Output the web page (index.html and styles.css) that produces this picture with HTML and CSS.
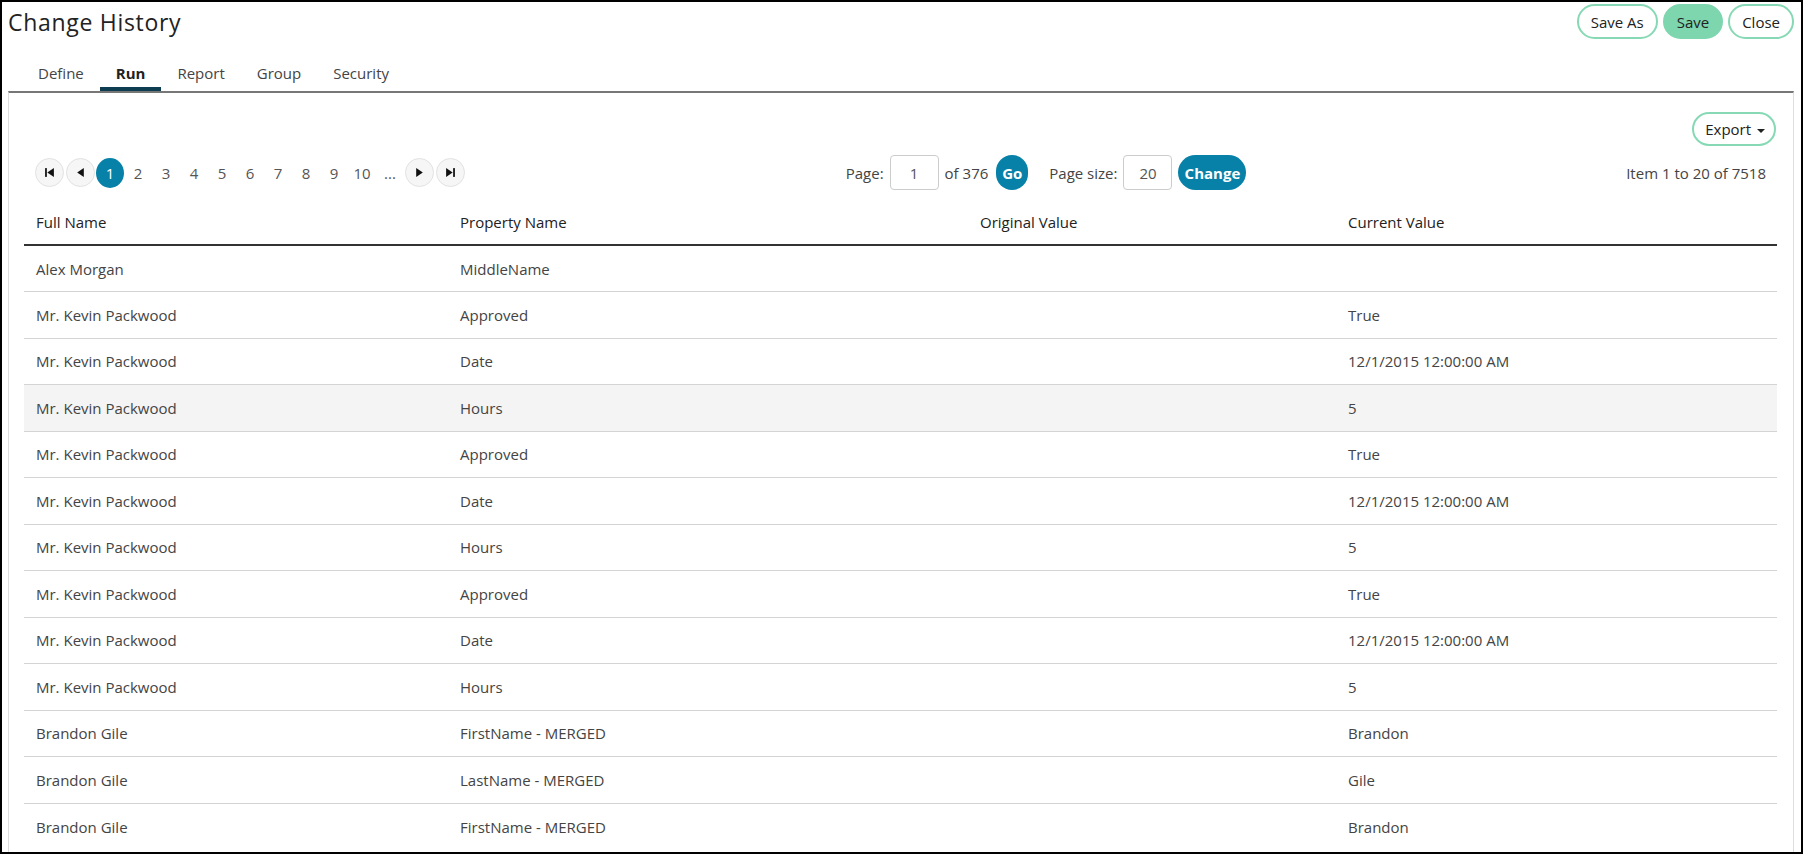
FILE: index.html
```html
<!DOCTYPE html>
<html lang="en">
<head>
    <meta charset="UTF-8">
    <meta name="viewport" content="width=device-width, initial-scale=1.0">
    <title>Change History</title>
    <link rel="stylesheet" href="styles.css">
</head>
<body>
    <div class="frame">
        <header class="topbar">
            <h1>Change History</h1>
            <div class="actions">
                <button class="pill">Save As</button>
                <button class="pill filled">Save</button>
                <button class="pill">Close</button>
            </div>
        </header>

        <nav class="tabs">
            <a class="tab">Define</a>
            <a class="tab active">Run</a>
            <a class="tab">Report</a>
            <a class="tab">Group</a>
            <a class="tab">Security</a>
        </nav>

        <section class="panel">
            <div class="export-row">
                <button class="pill export">Export <span class="caret"></span></button>
            </div>

            <div class="pager-row">
                <div class="pager">
                    <button class="nav-btn" title="First">
                        <svg width="11" height="11" viewBox="0 0 10 10"><rect x="1" y="1" width="1.6" height="8" fill="#111"/><path d="M9 1 L3 5 L9 9 Z" fill="#111"/></svg>
                    </button>
                    <button class="nav-btn" title="Previous">
                        <svg width="11" height="11" viewBox="0 0 10 10"><path d="M8 1 L2 5 L8 9 Z" fill="#111"/></svg>
                    </button>
                    <span class="page current">1</span>
                    <span class="page">2</span>
                    <span class="page">3</span>
                    <span class="page">4</span>
                    <span class="page">5</span>
                    <span class="page">6</span>
                    <span class="page">7</span>
                    <span class="page">8</span>
                    <span class="page">9</span>
                    <span class="page">10</span>
                    <span class="page">...</span>
                    <button class="nav-btn" title="Next">
                        <svg width="11" height="11" viewBox="0 0 10 10"><path d="M2 1 L8 5 L2 9 Z" fill="#111"/></svg>
                    </button>
                    <button class="nav-btn" title="Last">
                        <svg width="11" height="11" viewBox="0 0 10 10"><path d="M1 1 L7 5 L1 9 Z" fill="#111"/><rect x="7.4" y="1" width="1.6" height="8" fill="#111"/></svg>
                    </button>
                </div>

                <div class="page-controls">
                    <label>Page:</label>
                    <input type="text" class="box page-box" value="1">
                    <span>of 376</span>
                    <button class="blue go">Go</button>
                    <label class="size-label">Page size:</label>
                    <input type="text" class="box size-box" value="20">
                    <button class="blue change">Change</button>
                </div>

                <div class="count">Item 1 to 20 of 7518</div>
            </div>

            <table class="grid">
                <colgroup>
                    <col class="c-name">
                    <col class="c-prop">
                    <col class="c-orig">
                    <col>
                </colgroup>
                <thead>
                    <tr>
                        <th>Full Name</th>
                        <th>Property Name</th>
                        <th>Original Value</th>
                        <th>Current Value</th>
                    </tr>
                </thead>
                <tbody>
                    <tr><td>Alex Morgan</td><td>MiddleName</td><td></td><td></td></tr>
                    <tr><td>Mr. Kevin Packwood</td><td>Approved</td><td></td><td>True</td></tr>
                    <tr><td>Mr. Kevin Packwood</td><td>Date</td><td></td><td>12/1/2015 12:00:00 AM</td></tr>
                    <tr class="hover"><td>Mr. Kevin Packwood</td><td>Hours</td><td></td><td>5</td></tr>
                    <tr><td>Mr. Kevin Packwood</td><td>Approved</td><td></td><td>True</td></tr>
                    <tr><td>Mr. Kevin Packwood</td><td>Date</td><td></td><td>12/1/2015 12:00:00 AM</td></tr>
                    <tr><td>Mr. Kevin Packwood</td><td>Hours</td><td></td><td>5</td></tr>
                    <tr><td>Mr. Kevin Packwood</td><td>Approved</td><td></td><td>True</td></tr>
                    <tr><td>Mr. Kevin Packwood</td><td>Date</td><td></td><td>12/1/2015 12:00:00 AM</td></tr>
                    <tr><td>Mr. Kevin Packwood</td><td>Hours</td><td></td><td>5</td></tr>
                    <tr><td>Brandon Gile</td><td>FirstName - MERGED</td><td></td><td>Brandon</td></tr>
                    <tr><td>Brandon Gile</td><td>LastName - MERGED</td><td></td><td>Gile</td></tr>
                    <tr class="last"><td>Brandon Gile</td><td>FirstName - MERGED</td><td></td><td>Brandon</td></tr>
                </tbody>
            </table>
        </section>
    </div>
</body>
</html>
```

FILE: styles.css
```css
* {
    box-sizing: border-box;
}
body {
    margin: 0;
    font-family: 'Open Sans', 'Liberation Sans', sans-serif;
    color: #333;
    background: #fff;
}
.frame {
    height: 854px;
    border: 2px solid #000;
    display: flex;
    flex-direction: column;
    overflow: hidden;
}
.topbar {
    display: flex;
    justify-content: space-between;
    align-items: center;
    height: 37px;
    padding: 2px 7px 0 6px;
}
.topbar h1 {
    margin: 0;
    font-size: 23px;
    font-weight: 400;
    letter-spacing: 0.7px;
    color: #222;
}
.actions {
    display: flex;
    gap: 5px;
}
.pill {
    height: 35px;
    padding: 0 12px;
    border: 2px solid #86d9b4;
    border-radius: 18px;
    background: #fff;
    font-family: inherit;
    font-size: 15px;
    color: #222;
    cursor: pointer;
}
.pill.filled {
    background-color: #7dd6ae;
    border-color: #7dd6ae;
}
.tabs {
    display: flex;
    margin: 22px 0 0 20px;
}
.tab {
    padding: 2px 16px 4px;
    line-height: 20px;
    font-size: 15px;
    color: #444;
    border-bottom: 4px solid transparent;
}
.tab.active {
    font-weight: 700;
    color: #222;
    border-bottom-color: #0e3c50;
}
.panel {
    flex: 1;
    margin: 0 7px 0 6px;
    padding: 19px 16px 0 15px;
    border-top: 2px solid #777;
    border-left: 1px solid #ddd;
    border-right: 1px solid #ddd;
}
.export-row {
    display: flex;
    justify-content: flex-end;
    padding-right: 1px;
}
.export {
    height: 34px;
    padding: 0 9px 0 11px;
}
.caret {
    display: inline-block;
    margin-left: 2px;
    vertical-align: middle;
    border-top: 4px solid #222;
    border-left: 4px solid transparent;
    border-right: 4px solid transparent;
}
.pager-row {
    display: flex;
    justify-content: space-between;
    align-items: center;
    height: 35px;
    margin-top: 9px;
    padding: 0 11px 0 10px;
}
.pager {
    display: flex;
    align-items: center;
}
.nav-btn {
    width: 29px;
    height: 29px;
    margin: 0 1px;
    padding: 0;
    border: 1px solid #e2e2e2;
    border-radius: 50%;
    background: #f6f6f6;
    display: flex;
    align-items: center;
    justify-content: center;
    cursor: pointer;
}
.page {
    width: 28px;
    height: 30px;
    line-height: 30px;
    text-align: center;
    font-size: 15px;
    color: #555;
}
.page.current {
    background-color: #0781a8;
    color: #fff;
    border-radius: 50%;
}
.page-controls {
    display: flex;
    align-items: center;
    gap: 6px;
    font-size: 15px;
    color: #444;
}
.box {
    width: 49px;
    height: 35px;
    border: 1px solid #ccc;
    border-radius: 4px;
    text-align: center;
    font-family: inherit;
    font-size: 15px;
    color: #555;
}
.size-label {
    margin-left: 15px;
}
.blue {
    height: 35px;
    border: none;
    border-radius: 18px;
    background-color: #0781a8;
    color: #fff;
    font-family: inherit;
    font-size: 15px;
    font-weight: 700;
    cursor: pointer;
}
.go {
    width: 32px;
    padding: 0;
    margin-left: 2px;
}
.change {
    width: 68px;
    padding: 0;
}
.count {
    font-size: 15px;
    color: #444;
}
.grid {
    width: 100%;
    margin-top: 9px;
    border-collapse: collapse;
    font-size: 15px;
}
.c-name {
    width: 424px;
}
.c-prop {
    width: 520px;
}
.c-orig {
    width: 368px;
}
.grid th {
    height: 46px;
    padding: 0 12px;
    text-align: left;
    font-weight: 400;
    color: #222;
    border-bottom: 2px solid #333;
}
.grid td {
    height: 46.5px;
    padding: 0 12px;
    color: #444;
    border-bottom: 1px solid #d4d4d4;
}
.grid tr.last td {
    border-bottom: none;
}
.grid tr.hover td {
    background-color: #f4f4f4;
}
```
